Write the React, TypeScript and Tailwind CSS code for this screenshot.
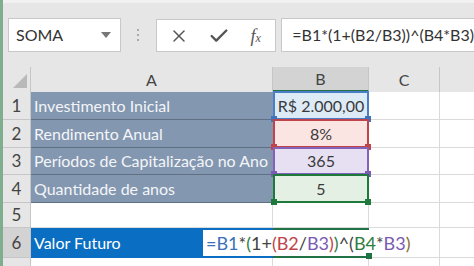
import { X, Check } from "lucide-react";

const font = { fontFamily: "Lato, 'Open Sans', sans-serif" };

const rows = [
  { n: "1", label: "Investimento Inicial", value: "R$ 2.000,00", h: "h-[28px]", fill: "bg-[#ddebf7]", line: "border-[#4a7fc7]", dot: "bg-[#3f74bd]" },
  { n: "2", label: "Rendimento Anual", value: "8%", h: "h-[28px]", fill: "bg-[#fbe5e3]", line: "border-[#c0444a]", dot: "bg-[#c0444a]" },
  { n: "3", label: "Períodos de Capitalização no Ano", value: "365", h: "h-[27px]", fill: "bg-[#e6e0f2]", line: "border-[#8262b8]", dot: "bg-[#7a5bb3]" },
  { n: "4", label: "Quantidade de anos", value: "5", h: "h-[28px]", fill: "bg-[#e4f0e4]", line: "border-[#1e7a3a]", dot: "bg-[#1e7a3a]" },
];

function Formula() {
  return (
    <>
      <span className="text-[#3b6fb8]">=B1</span>
      <span className="text-[#444]">*</span>
      <span className="text-[#2f7d3f]">(</span>
      <span className="text-[#444]">1+</span>
      <span className="text-[#c0444a]">(B2</span>
      <span className="text-[#444]">/</span>
      <span className="text-[#7a5bb3]">B3</span>
      <span className="text-[#c0444a]">)</span>
      <span className="text-[#2f7d3f]">)</span>
      <span className="text-[#444]">^(</span>
      <span className="text-[#2f7d3f]">B4</span>
      <span className="text-[#444]">*</span>
      <span className="text-[#7a5bb3]">B3</span>
      <span className="text-[#8a6d2f]">)</span>
    </>
  );
}

export default function App() {
  return (
    <div className="w-[474px] h-[266px] overflow-hidden bg-[#e6e6e6] border-l-[3px] border-[#7fae8f] flex flex-col" style={font}>
      {/* formula bar */}
      <div className="h-[67px] shrink-0 flex items-start pt-[15px] pl-[5px] border-t-[3px] border-[#f1f1f1]">
        <div className="w-[114px] h-[34px] bg-white border border-[#c8c8c8] flex items-center justify-between pl-[7px] pr-[9px]">
          <span className="text-[16px] text-[#333]">SOMA</span>
          <span className="w-0 h-0 border-l-[5px] border-r-[5px] border-t-[6px] border-l-transparent border-r-transparent border-t-[#777]" />
        </div>
        <div className="w-[35px] h-[34px] flex flex-col items-center justify-center gap-[3px]">
          <span className="w-[2px] h-[2px] bg-[#aaa]" />
          <span className="w-[2px] h-[2px] bg-[#aaa]" />
          <span className="w-[2px] h-[2px] bg-[#aaa]" />
        </div>
        <div className="w-[122px] h-[33px] mt-[1px] bg-white border border-[#c8c8c8] flex items-center pl-[12px] gap-[19px]">
          <X size={20} strokeWidth={1.8} className="text-[#555]" />
          <Check size={22} strokeWidth={2.6} className="text-[#555]" />
          <span className="text-[18px] italic text-[#555] leading-none pl-[2px]" style={{ fontFamily: "'Liberation Serif', serif" }}>f<span className="text-[12px]">x</span></span>
        </div>
        <div className="flex-1 h-[34px] ml-[5px] bg-white border border-[#c8c8c8] border-r-0 flex items-center pl-[10px]">
          <span className="text-[16px] text-[#333] whitespace-nowrap">=B1*(1+(B2/B3))^(B4*B3)</span>
        </div>
      </div>

      {/* grid */}
      <div className="relative flex-1 bg-white">
        {/* header row */}
        <div className="flex h-[25px] bg-[#e6e6e6] text-[16px] text-[#444]">
          <div className="w-[28px] border-r border-[#c6c6c6] flex items-end justify-end pr-[3px] pb-[4px]">
            <span className="w-0 h-0" style={{ borderBottom: "14px solid #b9b9b9", borderLeft: "14px solid transparent" }} />
          </div>
          <div className="w-[242px] border-r border-[#c6c6c6] flex items-center justify-center">A</div>
          <div className="w-[96px] bg-[#d3d3d3] border-r border-[#c6c6c6] border-b-2 border-b-[#217346] flex items-center justify-center">B</div>
          <div className="w-[71px] border-r border-[#c6c6c6] flex items-center justify-center">C</div>
          <div className="flex-1" />
        </div>

        {rows.map((r) => (
          <div key={r.n} className={`flex ${r.h} text-[16px]`}>
            <div className="w-[28px] bg-[#e6e6e6] border-r border-b border-[#c6c6c6] flex items-center justify-center text-[#444] text-[17px]">{r.n}</div>
            <div className="w-[242px] bg-[#8497b0] border-b border-[#5f6f84] flex items-center pl-[3px] text-[#f3f5f8] whitespace-nowrap overflow-hidden">{r.label}</div>
            <div className={`relative w-[96px] ${r.fill} border-2 ${r.line} -mt-[1px] flex items-center justify-center text-[#3a3a3a]`}>
              {r.value}
              <span className={`absolute -left-[4px] -bottom-[4px] w-[6px] h-[6px] ${r.dot}`} />
              <span className={`absolute -right-[4px] -bottom-[4px] w-[6px] h-[6px] ${r.dot}`} />
            </div>
            <div className="w-[71px] border-r border-b border-[#dadada]" />
            <div className="flex-1 border-b border-[#dadada]" />
          </div>
        ))}

        {/* row 5 */}
        <div className="flex h-[25px] text-[17px]">
          <div className="w-[28px] bg-[#e6e6e6] border-r border-b border-[#c6c6c6] flex items-center justify-center text-[#444]">5</div>
          <div className="w-[242px] border-r border-b border-[#dadada]" />
          <div className="w-[96px] border-r border-b border-[#dadada]" />
          <div className="w-[71px] border-r border-b border-[#dadada]" />
          <div className="flex-1 border-b border-[#dadada]" />
        </div>

        {/* row 6 */}
        <div className="relative flex h-[30px] text-[16px]">
          <div className="w-[28px] bg-[#d3d3d3] border-r border-b border-[#c6c6c6] flex items-center justify-center text-[#444] text-[17px]">6</div>
          <div className="w-[242px] bg-[#0a6fc2] flex items-center pl-[3px] text-white">Valor Futuro</div>
          <div className="w-[96px] border-t-2 border-b-2 border-[#217346]" />
          <div className="w-[71px] border-r border-b border-[#dadada]" />
          <div className="flex-1 border-b border-[#dadada]" />
          {/* in-cell editor */}
          <div className="absolute left-[200px] top-[2px] h-[26px] w-[209px] bg-white flex items-center pl-[3px] whitespace-nowrap text-[18px]">
            <Formula />
            <span className="w-px h-[22px] bg-[#333] ml-[2px]" />
          </div>
          <span className="absolute left-[363px] top-[25px] w-[6px] h-[6px] bg-[#217346]" />
        </div>

        {/* row 7 */}
        <div className="flex h-[20px]">
          <div className="w-[28px] bg-[#e6e6e6] border-r border-[#c6c6c6]" />
          <div className="w-[242px] border-r border-[#dadada]" />
          <div className="w-[96px] border-r border-[#dadada]" />
          <div className="w-[71px] border-r border-[#dadada]" />
        </div>
      </div>
    </div>
  );
}
